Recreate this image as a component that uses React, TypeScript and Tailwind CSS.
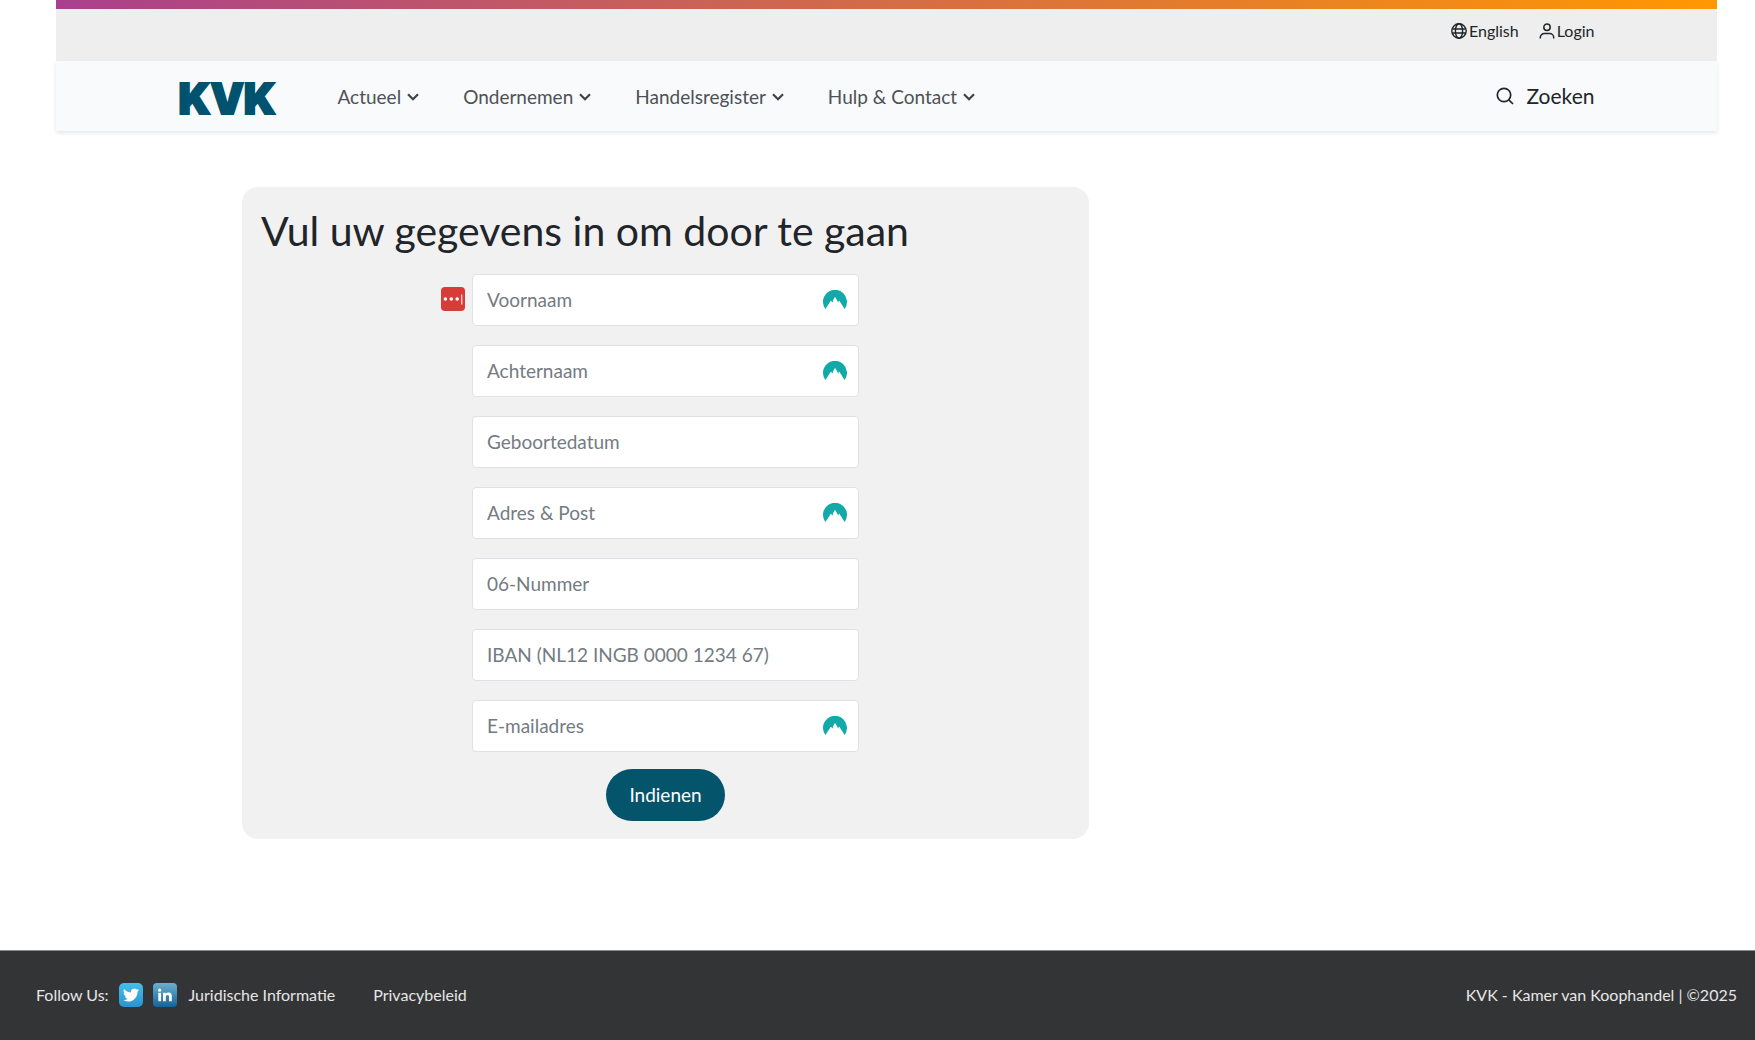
import React from "react";

const NAV_ITEMS = ["Actueel", "Ondernemen", "Handelsregister", "Hulp & Contact"];

type Field = {
  id: string;
  label: string;
  type: string;
  vpnMark?: boolean;
  passwordMark?: boolean;
};

const FIELDS: Field[] = [
  { id: "voornaam", label: "Voornaam", type: "text", vpnMark: true, passwordMark: true },
  { id: "achternaam", label: "Achternaam", type: "text", vpnMark: true },
  { id: "geboortedatum", label: "Geboortedatum", type: "text" },
  { id: "adres", label: "Adres & Post", type: "text", vpnMark: true },
  { id: "nummer", label: "06-Nummer", type: "tel" },
  { id: "iban", label: "IBAN (NL12 INGB 0000 1234 67)", type: "text" },
  { id: "email", label: "E-mailadres", type: "email", vpnMark: true },
];

function Chevron() {
  return (
    <svg viewBox="0 0 12 8" className="h-2 w-3" fill="none" stroke="#3f4347" strokeWidth="2.2" aria-hidden="true">
      <path d="M1 1.2 6 6.2 11 1.2" />
    </svg>
  );
}

function Globe() {
  return (
    <svg viewBox="0 0 16 16" className="size-4" fill="none" stroke="#212529" strokeWidth="1.4" aria-hidden="true">
      <circle cx="8" cy="8" r="7.2" />
      <ellipse cx="8" cy="8" rx="3.6" ry="7.2" />
      <path d="M1.2 6h13.6M1.2 10h13.6" />
    </svg>
  );
}

function Person() {
  return (
    <svg viewBox="0 0 16 16" className="size-4" fill="none" stroke="#212529" strokeWidth="1.5" aria-hidden="true">
      <circle cx="8" cy="4.2" r="3.2" />
      <path d="M1.3 15.4v-.8a4 4 0 0 1 4-4h5.4a4 4 0 0 1 4 4v.8" />
    </svg>
  );
}

function Magnifier() {
  return (
    <svg viewBox="0 0 18 18" className="size-[18px]" fill="none" stroke="#212529" strokeWidth="1.7" aria-hidden="true">
      <circle cx="8" cy="8" r="6.7" />
      <path d="m12.8 12.8 4.2 4.2" />
    </svg>
  );
}

function VpnMark() {
  return (
    <svg viewBox="0 0 24 20" className="h-5 w-6" aria-hidden="true">
      <path
        fill="#12aaa8"
        d="M2.4 19A12 12 0 1 1 21.6 19L16.2 10.4 15.3 12 15.7 13.3 12 6.8 9.8 10.8 10.2 12.8 7.8 10.7Z"
      />
    </svg>
  );
}

function PasswordMark() {
  return (
    <svg viewBox="0 0 24 24" className="size-6" aria-hidden="true">
      <rect width="24" height="24" rx="4" fill="#d63d39" />
      <g fill="#fff">
        <circle cx="4.4" cy="12" r="1.8" />
        <circle cx="10.3" cy="12" r="1.8" />
        <circle cx="16.2" cy="12" r="1.8" />
        <rect x="20.3" y="7.5" width="1" height="10" />
      </g>
    </svg>
  );
}

function Twitter() {
  return (
    <svg viewBox="0 0 24 24" className="size-6" aria-hidden="true">
      <defs>
        <linearGradient id="tw" x1="0" y1="0" x2="0" y2="1">
          <stop offset="0" stopColor="#43bfe8" />
          <stop offset="1" stopColor="#2b93d2" />
        </linearGradient>
      </defs>
      <rect width="24" height="24" rx="5" fill="url(#tw)" />
      <path
        transform="translate(4 4) scale(.67)"
        fill="#fff"
        d="M23.95 4.57a10 10 0 0 1-2.82.77 4.96 4.96 0 0 0 2.16-2.72c-.95.55-2 .95-3.13 1.18a4.92 4.92 0 0 0-8.38 4.48C7.69 8.1 4.07 6.13 1.64 3.16a4.92 4.92 0 0 0 1.52 6.57 4.9 4.9 0 0 1-2.23-.61v.06a4.92 4.92 0 0 0 3.95 4.83 5 5 0 0 1-2.21.08 4.94 4.94 0 0 0 4.6 3.42A9.87 9.87 0 0 1 0 19.54a14 14 0 0 0 7.55 2.21c9.05 0 14-7.5 14-13.98 0-.21 0-.42-.02-.63a9.94 9.94 0 0 0 2.46-2.55z"
      />
    </svg>
  );
}

function LinkedIn() {
  return (
    <svg viewBox="0 0 24 24" className="size-6" aria-hidden="true">
      <defs>
        <linearGradient id="li" x1="0" y1="0" x2="0" y2="1">
          <stop offset="0" stopColor="#6cb0d0" />
          <stop offset="1" stopColor="#12649a" />
        </linearGradient>
      </defs>
      <rect width="24" height="24" rx="4" fill="url(#li)" />
      <g fill="#fff">
        <circle cx="6.7" cy="7.2" r="1.6" />
        <rect x="5.3" y="9.8" width="2.8" height="8.4" />
        <path d="M10 9.8h2.7V11c.5-.8 1.4-1.4 2.8-1.4 2.5 0 3.3 1.6 3.3 3.8v4.8H16v-4.4c0-1.1-.3-1.9-1.4-1.9-1.2 0-1.8.8-1.8 2v4.3H10z" />
      </g>
    </svg>
  );
}

function Header() {
  return (
    <header className="mr-[38px] ml-14">
      <div className="h-[9px] bg-linear-to-r/srgb from-[#a9408d] to-[#ff9800]" />
      <div className="h-[52px] bg-[#eeeeee]">
        <div className="mx-auto flex max-w-[1416px] justify-end gap-5 pt-2.5 text-base leading-6 text-[#212529]">
          <a href="#english" className="flex items-center gap-0.5">
            <Globe />
            English
          </a>
          <a href="#login" className="flex items-center gap-0.5">
            <Person />
            Login
          </a>
        </div>
      </div>
      <div className="bg-[#f8fafc] shadow-[0_2px_4px_rgba(0,0,0,0.1)]">
        <div className="mx-auto flex h-[70px] max-w-[1416px] items-center">
          <a
            href="#home"
            className="w-[159px] pt-1.5 font-['Inter',sans-serif] text-[42px] leading-none font-black text-[#00526e] [-webkit-text-stroke:2px_#00526e]"
          >
            KVK
          </a>
          <nav className="flex gap-11 pt-0.5 text-[19px] text-[#4e5155]">
            {NAV_ITEMS.map((item) => (
              <button key={item} type="button" className="flex items-center gap-1.5">
                {item}
                <Chevron />
              </button>
            ))}
          </nav>
          <button type="button" className="ml-auto flex items-center gap-3 text-[21px] text-[#212529]">
            <Magnifier />
            Zoeken
          </button>
        </div>
      </div>
    </header>
  );
}

function FormField({ field }: { field: Field }) {
  return (
    <div className="relative">
      <input
        id={field.id}
        type={field.type}
        aria-label={field.label}
        placeholder={field.label}
        className="block h-[52px] w-full rounded border border-[#dee2e6] bg-white px-3.5 pb-0.5 text-[19px] text-[#212529] placeholder:text-[#747b82]"
      />
      {field.vpnMark && (
        <span className="absolute top-4 right-3">
          <VpnMark />
        </span>
      )}
      {field.passwordMark && (
        <span className="absolute top-[13px] -left-[31px]">
          <PasswordMark />
        </span>
      )}
    </div>
  );
}

export default function App() {
  return (
    <div className="flex min-h-screen flex-col bg-white font-['Lato',sans-serif]">
      <Header />
      <main className="flex-1 px-[242px] pt-14 pb-12">
        <section className="max-w-[847px] rounded-2xl bg-[#f1f1f1] px-[19px] py-[18px]">
          <h1 className="mb-[17px] text-[41px] leading-[52px] text-[#212529]">Vul uw gegevens in om door te gaan</h1>
          <form className="mx-auto flex max-w-[387px] flex-col" onSubmit={(e) => e.preventDefault()}>
            <div className="flex flex-col gap-[19px]">
              {FIELDS.map((field) => (
                <FormField key={field.id} field={field} />
              ))}
            </div>
            <button
              type="submit"
              className="mt-[17px] h-[52px] self-center rounded-full bg-[#04546c] px-[23px] text-[19px] text-white"
            >
              Indienen
            </button>
          </form>
        </section>
      </main>
      <footer className="flex h-[90px] items-center border-t border-[#8a8c8c] bg-[#333435] pr-[18px] pb-0.5 pl-9 text-base text-[#e6e6e6]">
        <span className="mr-2.5">Follow Us:</span>
        <a href="#twitter" aria-label="Twitter" className="mr-2.5">
          <Twitter />
        </a>
        <a href="#linkedin" aria-label="LinkedIn" className="mr-3">
          <LinkedIn />
        </a>
        <a href="#juridisch" className="mr-[38px]">
          Juridische Informatie
        </a>
        <a href="#privacy">Privacybeleid</a>
        <span className="ml-auto">KVK - Kamer van Koophandel | ©2025</span>
      </footer>
    </div>
  );
}
